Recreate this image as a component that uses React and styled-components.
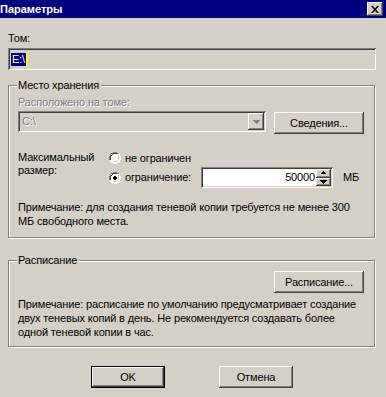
import React from 'react'
import styled, { createGlobalStyle } from 'styled-components'

const Global = createGlobalStyle`
  html, body { margin: 0; padding: 0; background: #d4d0c8; }
  * { box-sizing: border-box; }
`

const raised = `
  background: #d4d0c8;
  box-shadow: inset -1px -1px #404040, inset 1px 1px #ffffff, inset -2px -2px #808080, inset 2px 2px #d4d0c8;
`
const sunken = `
  box-shadow: inset 1px 1px #808080, inset -1px -1px #ffffff, inset 2px 2px #404040, inset -2px -2px #d4d0c8;
`

const Window = styled.div`
  width: 386px;
  height: 397px;
  background: #d4d0c8;
  font-family: "Liberation Sans", Arial, sans-serif;
  font-size: 11px;
  line-height: 13px;
  letter-spacing: -0.15px;
  color: #000;
  overflow: hidden;
`

const TitleBar = styled.div`
  height: 18px;
  background: #000080;
  display: flex;
  align-items: center;
  justify-content: space-between;
  padding-right: 3px;
`

const Title = styled.span`
  color: #fff;
  font-weight: bold;
  font-size: 11px;
  letter-spacing: 0;
`

const CloseBtn = styled.div`
  ${raised}
  width: 16px;
  height: 14px;
  display: flex;
  align-items: center;
  justify-content: center;
`

const Content = styled.div`
  padding: 14px 10px 0 8px;
`

const Label = styled.div`
  color: ${(p) => (p.disabled ? '#808080' : '#000')};
  text-shadow: ${(p) => (p.disabled ? '1px 1px 0 #fff' : 'none')};
  margin-bottom: ${(p) => p.mb || 0}px;
`

const VolumeField = styled.div`
  ${sunken}
  height: 22px;
  margin-top: 3px;
  display: flex;
  align-items: center;
  padding-left: 3px;
`

const Selected = styled.span`
  background: #000080;
  color: #fff;
  padding: 0 1px;
  line-height: 13px;
`

const Caret = styled.span`
  width: 2px;
  height: 13px;
  background: #ffff00;
`

const Group = styled.div`
  position: relative;
  margin-top: ${(p) => p.mt}px;
  border: 1px solid #808080;
  box-shadow: 1px 1px 0 #fff, inset 1px 1px 0 #fff;
  margin-right: 1px;
  padding: ${(p) => p.pt}px 10px ${(p) => p.pb}px 9px;
`

const Legend = styled.span`
  position: absolute;
  top: -7px;
  left: 8px;
  padding: 0 2px 0 1px;
  background: #d4d0c8;
`

const Row = styled.div`
  display: flex;
  align-items: flex-start;
  justify-content: ${(p) => (p.end ? 'flex-end' : 'space-between')};
`

const Combo = styled.div`
  ${sunken}
  width: 248px;
  height: 21px;
  display: flex;
  align-items: center;
  justify-content: space-between;
  padding: 0 2px 0 4px;
  color: #808080;
  text-shadow: 1px 1px 0 #fff;
`

const ArrowBtn = styled.div`
  ${raised}
  width: 16px;
  height: 17px;
  display: flex;
  align-items: center;
  justify-content: center;
`

const Button = styled.div`
  ${raised}
  width: ${(p) => p.w || 90}px;
  height: 22px;
  margin-top: ${(p) => p.mt || 0}px;
  display: flex;
  align-items: center;
  justify-content: center;
  ${(p) =>
    p.primary &&
    `box-shadow: inset 0 0 0 1px #000, inset -2px -2px #404040, inset 2px 2px #ffffff, inset -3px -3px #808080;`}
`

const SizeBlock = styled.div`
  display: flex;
  margin-top: 17px;
`

const SizeLabel = styled.div`
  width: 91px;
`

const Options = styled.div`
  display: flex;
  flex-direction: column;
  gap: 2px;
`

const Option = styled.div`
  display: flex;
  align-items: center;
  height: ${(p) => p.h}px;
`

const RadioText = styled.span`
  margin-left: 4px;
  width: ${(p) => p.w || 'auto'};
`

const Spin = styled.div`
  ${sunken}
  background: #fff;
  width: 132px;
  height: 21px;
  display: flex;
  align-items: center;
  justify-content: flex-end;
  padding: 2px;
`

const SpinValue = styled.span`
  padding-right: 1px;
`

const SpinButtons = styled.div`
  display: flex;
  flex-direction: column;
  width: 15px;
  height: 17px;
`

const SpinBtn = styled.div`
  ${raised}
  flex: 1;
  display: flex;
  align-items: center;
  justify-content: center;
`

const Unit = styled.span`
  margin-left: 10px;
`

const Note = styled.div`
  margin-top: ${(p) => p.mt}px;
  line-height: 14px;
`

const Footer = styled.div`
  display: flex;
  justify-content: center;
  gap: 54px;
  margin-top: 19px;
`

const Radio = ({ checked }) => (
  <svg width="12" height="12" viewBox="0 0 12 12">
    <path d="M4 0h4v1h2v1h1v2h1v4h-1v2h-1v1h-2v1h-4v-1h-2v-1h-1v-2h-1v-4h1v-2h1v-1h2z" fill="#fff" />
    <path d="M4 0h4v1h2v1h-2v-1h-4v1h-2v2h-1v4h-1v-4h1v-2h1v-1h2z" fill="#808080" />
    <path d="M4 1h4v1h-4v1h-1v1h-1v4h-1v-4h1v-1h1v-1h1z" fill="#404040" />
    <path d="M10 2h1v2h1v4h-1v2h-1v1h-2v1h-4v-1h4v-1h2v-2h1v-4h-1z" fill="#ffffff" />
    <path d="M9 3h1v5h-1v1h-1v1h-4v-1h4v-1h1z" fill="#d4d0c8" />
    {checked && <path d="M5 4h2v1h1v2h-1v1h-2v-1h-1v-2h1z" fill="#000" />}
  </svg>
)

const Arrow = ({ up, color = '#000', w = 7 }) => (
  <svg width={w} height="4" viewBox={`0 0 ${w} 4`}>
    <path
      d={up ? 'M3 0h1v1h1v1h1v1h-5v-1h1v-1h1z' : 'M0 0h7v1h-1v1h-1v1h-1v1h-1v-1h-1v-1h-1v-1h-1z'}
      fill={color}
    />
  </svg>
)

export default function App() {
  return (
    <>
      <Global />
      <Window>
        <TitleBar>
          <Title>Параметры</Title>
          <CloseBtn>
            <svg width="8" height="7" viewBox="0 0 8 7">
              <path d="M0 0h2l2 2.5 2-2.5h2l-3 3.5 3 3.5h-2l-2-2.5-2 2.5h-2l3-3.5z" fill="#000" />
            </svg>
          </CloseBtn>
        </TitleBar>
        <Content>
          <Label>Том:</Label>
          <VolumeField>
            <Selected>E:\</Selected>
            <Caret />
          </VolumeField>

          <Group mt={15} pt={10} pb={9}>
            <Legend>Место хранения</Legend>
            <Label disabled mb={2}>Расположено на томе:</Label>
            <Row>
              <Combo>
                <span>C:\</span>
                <ArrowBtn>
                  <Arrow color="#808080" />
                </ArrowBtn>
              </Combo>
              <Button mt={1}>Сведения...</Button>
            </Row>
            <SizeBlock>
              <SizeLabel>
                Максимальный
                <br />
                размер:
              </SizeLabel>
              <Options>
                <Option h={14}>
                  <Radio />
                  <RadioText>не ограничен</RadioText>
                </Option>
                <Option h={21}>
                  <Radio checked />
                  <RadioText w="76px">ограничение:</RadioText>
                  <Spin>
                    <SpinValue>50000</SpinValue>
                    <SpinButtons>
                      <SpinBtn>
                        <Arrow up w={7} />
                      </SpinBtn>
                      <SpinBtn>
                        <Arrow w={7} />
                      </SpinBtn>
                    </SpinButtons>
                  </Spin>
                  <Unit>МБ</Unit>
                </Option>
              </Options>
            </SizeBlock>
            <Note mt={12}>
              Примечание: для создания теневой копии требуется не менее 300 МБ свободного места.
            </Note>
          </Group>

          <Group mt={22} pt={10} pb={7}>
            <Legend>Расписание</Legend>
            <Row end>
              <Button>Расписание...</Button>
            </Row>
            <Note mt={4}>
              Примечание: расписание по умолчанию предусматривает создание двух теневых копий в
              день. Не рекомендуется создавать более одной теневой копии в час.
            </Note>
          </Group>

          <Footer>
            <Button primary w={74}>OK</Button>
            <Button w={74}>Отмена</Button>
          </Footer>
        </Content>
      </Window>
    </>
  )
}
